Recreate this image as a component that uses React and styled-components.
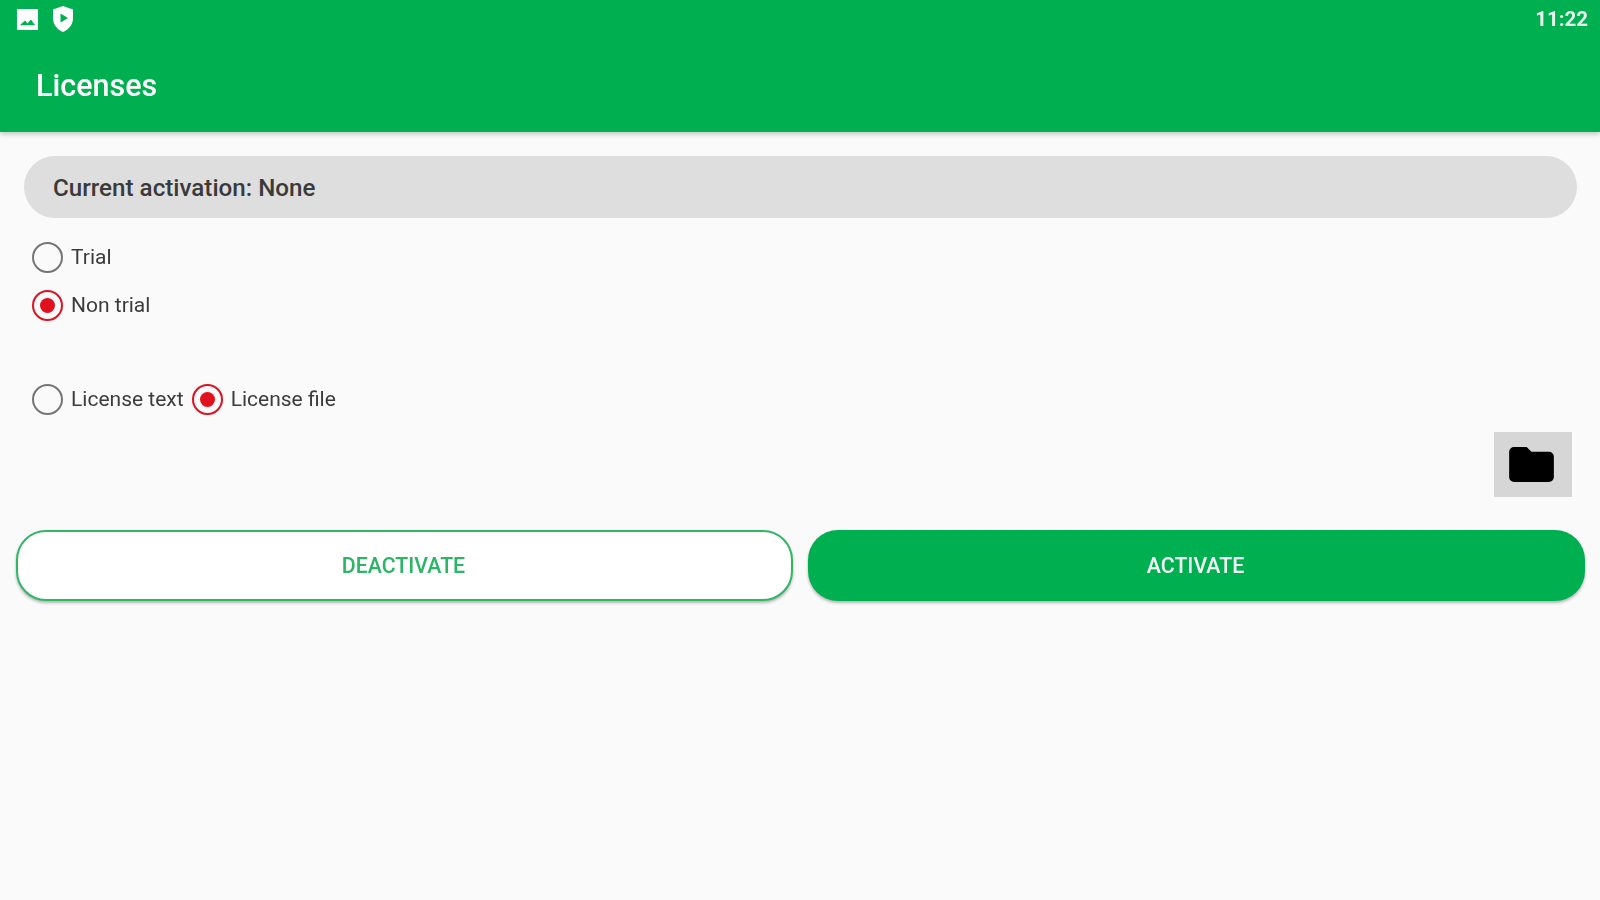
import React from "react";
import styled, { createGlobalStyle } from "styled-components";

const Global = createGlobalStyle`
  html, body { margin: 0; padding: 0; background: #fafafa; }
  body { font-family: Roboto, "Liberation Sans", sans-serif; }
`;

const Page = styled.div`
  width: 1600px;
  height: 900px;
  overflow: hidden;
  background: #fafafa;
  display: flex;
  flex-direction: column;
`;

const Header = styled.header`
  height: 132px;
  flex: none;
  background: #00b050;
  box-shadow: 0 2px 5px rgba(0, 0, 0, 0.22);
  color: #fff;
  display: flex;
  flex-direction: column;
`;

const StatusBar = styled.div`
  height: 38px;
  padding: 0 12px 0 16px;
  display: flex;
  align-items: center;
  gap: 13px;
`;

const Time = styled.span`
  margin-left: auto;
  font-size: 20.5px;
  font-weight: 700;
  color: #e8f6ee;
  filter: blur(0.7px);
`;

const Title = styled.h1`
  margin: 0;
  padding: 30px 0 0 36px;
  font-size: 30.5px;
  line-height: 36px;
  font-weight: 500;
  filter: blur(0.7px);
`;

const Content = styled.main`
  display: flex;
  flex-direction: column;
  padding: 24px 15px 0 16px;
`;

const Activation = styled.div`
  height: 62px;
  margin: 0 8px;
  border-radius: 31px;
  background: #dedede;
  padding: 2px 29px 0;
  box-sizing: border-box;
  display: flex;
  align-items: center;
  font-size: 24.2px;
  font-weight: 500;
  color: #3a3a3a;
`;

const RadioColumn = styled.div`
  display: flex;
  flex-direction: column;
  gap: 16px;
  padding: 23px 0 0 16px;
`;

const RadioRow = styled.div`
  display: flex;
  align-items: center;
  gap: 8px;
  padding: 62px 0 0 16px;
`;

const Option = styled.label`
  display: flex;
  align-items: center;
  gap: 8px;
  font-size: 21px;
  line-height: 32px;
  color: #3c3c3c;
  filter: blur(0.7px);
`;

const Dot = styled.span`
  box-sizing: border-box;
  width: 31px;
  height: 31px;
  border-radius: 50%;
  flex: none;
  border: 2.5px solid ${(p) => (p.$on ? "#e0101f" : "#757575")};
  display: flex;
  align-items: center;
  justify-content: center;
  &::after {
    content: "";
    width: 15px;
    height: 15px;
    border-radius: 50%;
    background: ${(p) => (p.$on ? "#e0101f" : "transparent")};
  }
`;

const FolderRow = styled.div`
  display: flex;
  justify-content: flex-end;
  padding: 17px 13px 0 0;
`;

const FolderButton = styled.button`
  width: 78px;
  height: 65px;
  border: 0;
  padding: 0 3px 0 0;
  background: #d6d6d6;
  display: flex;
  align-items: center;
  justify-content: center;
`;

const Actions = styled.div`
  display: grid;
  grid-template-columns: 777px 777px;
  gap: 15px;
  padding-top: 33px;
`;

const ActionButton = styled.button`
  box-sizing: border-box;
  height: 71px;
  border-radius: 30px;
  border: ${(p) => (p.$filled ? "0" : "2.5px solid #2fb765")};
  background: ${(p) => (p.$filled ? "#00b050" : "#fff")};
  color: ${(p) => (p.$filled ? "#f2fbf6" : "#2bb565")};
  font-family: inherit;
  font-size: 21.3px;
  font-weight: 500;
  text-transform: uppercase;
  box-shadow: 0 2px 3px rgba(0, 0, 0, 0.28);
  padding: 0 2px 0 0;
`;

const ButtonLabel = styled.span`
  display: block;
  filter: blur(0.7px);
`;

const Picture = () => (
  <svg width="23" height="23" viewBox="0 0 24 24" fill="#fff">
    <path fillRule="evenodd" d="M2 1h20a1 1 0 0 1 1 1v20a1 1 0 0 1-1 1H2a1 1 0 0 1-1-1V2a1 1 0 0 1 1-1zM4 18h16l-4.500-6-3.500 4.200L9.500 13z" />
  </svg>
);

const Shield = () => (
  <svg width="22" height="26" viewBox="0 0 22 26" fill="#fff">
    <path fillRule="evenodd" d="M11 0l10 3.600v8.600C21 18.400 16.800 23.600 11 26 5.200 23.600 1 18.400 1 12.200V3.600zM8.500 7.500v9l7.500-4.500z" />
  </svg>
);

const Folder = () => (
  <svg width="45" height="35" viewBox="0 0 46 36" fill="#000">
    <path d="M5 0h13l5 5h18a5 5 0 0 1 5 5v21a5 5 0 0 1-5 5H5a5 5 0 0 1-5-5V5a5 5 0 0 1 5-5z" />
  </svg>
);

export default function App() {
  return (
    <Page>
      <Global />
      <Header>
        <StatusBar>
          <Picture />
          <Shield />
          <Time>11:22</Time>
        </StatusBar>
        <Title>Licenses</Title>
      </Header>
      <Content>
        <Activation>Current activation: None</Activation>
        <RadioColumn>
          <Option><Dot />Trial</Option>
          <Option><Dot $on />Non trial</Option>
        </RadioColumn>
        <RadioRow>
          <Option><Dot />License text</Option>
          <Option><Dot $on />License file</Option>
        </RadioRow>
        <FolderRow>
          <FolderButton aria-label="Choose file"><Folder /></FolderButton>
        </FolderRow>
        <Actions>
          <ActionButton><ButtonLabel>Deactivate</ButtonLabel></ActionButton>
          <ActionButton $filled><ButtonLabel>Activate</ButtonLabel></ActionButton>
        </Actions>
      </Content>
    </Page>
  );
}
